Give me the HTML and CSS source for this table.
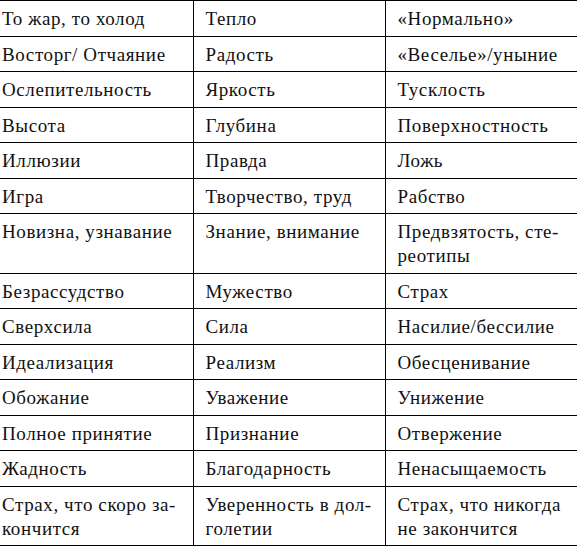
FILE: index.html
```html
<!DOCTYPE html>
<html lang="ru">
<head>
<meta charset="utf-8">
<link rel="stylesheet" href="styles.css">
</head>
<body>
<table class="grid">
  <colgroup><col class="c1"><col class="c2"><col class="c3"></colgroup>
  <tbody>
    <tr><td>То жар, то холод</td><td>Тепло</td><td>«Нормально»</td></tr>
    <tr><td>Восторг/ Отчаяние</td><td>Радость</td><td>«Веселье»/уныние</td></tr>
    <tr><td>Ослепительность</td><td>Яркость</td><td>Тусклость</td></tr>
    <tr><td>Высота</td><td>Глубина</td><td>Поверхностность</td></tr>
    <tr><td>Иллюзии</td><td>Правда</td><td>Ложь</td></tr>
    <tr><td>Игра</td><td>Творчество, труд</td><td>Рабство</td></tr>
    <tr><td>Новизна, узнавание</td><td>Знание, внимание</td><td>Предвзятость, сте-<br>реотипы</td></tr>
    <tr><td>Безрассудство</td><td>Мужество</td><td>Страх</td></tr>
    <tr><td>Сверхсила</td><td>Сила</td><td>Насилие/бессилие</td></tr>
    <tr><td>Идеализация</td><td>Реализм</td><td>Обесценивание</td></tr>
    <tr><td>Обожание</td><td>Уважение</td><td>Унижение</td></tr>
    <tr><td>Полное принятие</td><td>Признание</td><td>Отвержение</td></tr>
    <tr><td>Жадность</td><td>Благодарность</td><td>Ненасыщаемость</td></tr>
    <tr><td>Страх, что скоро за-<br>кончится</td><td>Уверенность в дол-<br>голетии</td><td>Страх, что никогда<br>не закончится</td></tr>
  </tbody>
</table>
</body>
</html>
```
FILE: styles.css
```css
html, body {
  margin: 0;
  padding: 0;
  background: #ffffff;
}
.grid {
  width: 577px;
  table-layout: fixed;
  border-collapse: collapse;
  font-family: "Liberation Serif", "Times New Roman", serif;
  font-size: 19px;
  letter-spacing: 0.6px;
  line-height: 24px;
  color: #111111;
}
.c1 { width: 193px; }
.c2 { width: 192px; }
.c3 { width: 192px; }
.grid td {
  border-top: 1.5px solid #000;
  border-bottom: 1.5px solid #000;
  padding: 6px 2px 4.5px 12px;
  vertical-align: top;
  white-space: nowrap;
}
.grid td + td {
  border-left: 1.5px solid #000;
}
.grid td:first-child {
  padding-left: 2px;
}
```
